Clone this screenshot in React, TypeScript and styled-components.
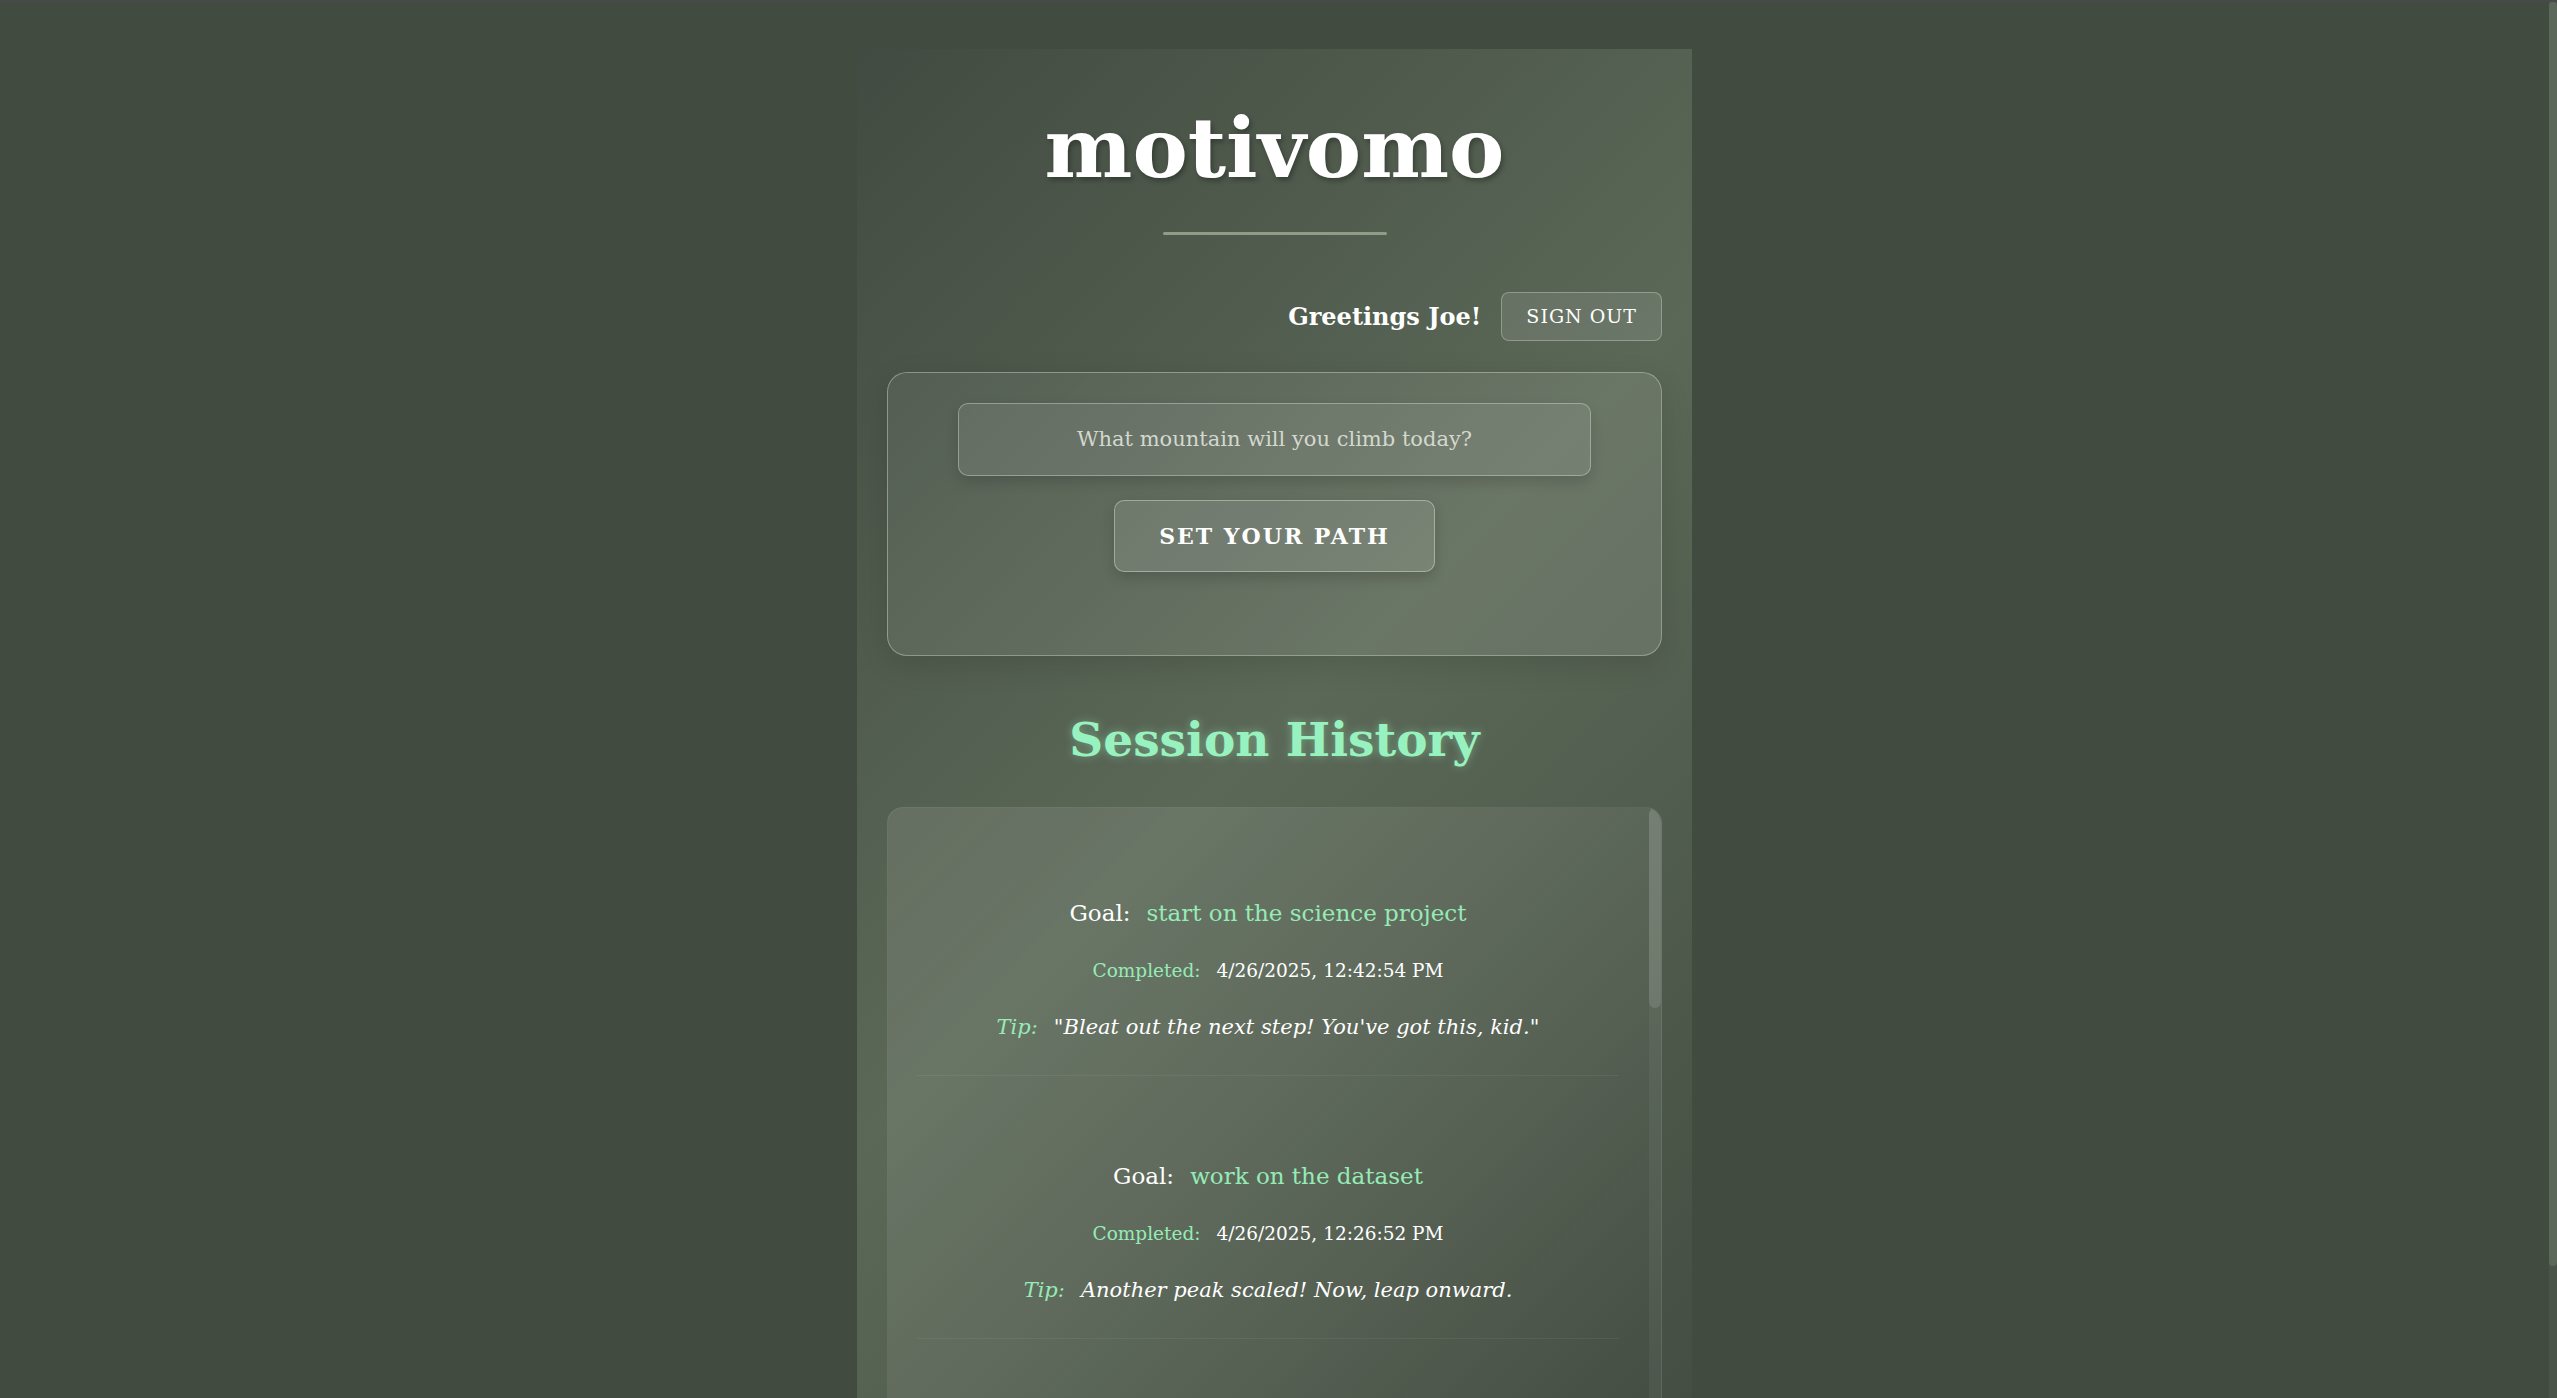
import React from "react";
import styled, { createGlobalStyle } from "styled-components";

const GlobalStyle = createGlobalStyle`
  html, body {
    margin: 0;
    padding: 0;
    background: #414b40;
  }
  body {
    border-top: 2px solid #47494b;
    font-family: "DejaVu Serif", Georgia, serif;
    color: #ffffff;
  }
`;

const Page = styled.div`
  display: flex;
  justify-content: center;
  padding: 47px 8px 47px 0;
`;

const PageScrollbar = styled.div`
  position: fixed;
  top: 2px;
  right: 0;
  bottom: 0;
  width: 8px;
  background: #4a5448;
`;

const PageThumb = styled.div`
  height: 1264px;
  border-radius: 4px;
  background: #5c695a;
`;

const Card = styled.main`
  width: 835px;
  box-sizing: border-box;
  padding: 50px 30px 30px;
  background: linear-gradient(135deg, #424b41 0%, #5b6857 48%, #424c41 100%);
  display: flex;
  flex-direction: column;
`;

const Title = styled.h1`
  margin: 0;
  text-align: center;
  font-size: 83px;
  line-height: 1.2;
  font-weight: 700;
  color: #ffffff;
  text-shadow: 2px 3px 5px rgba(0, 0, 0, 0.3);
`;

const Divider = styled.div`
  width: 224px;
  height: 3px;
  border-radius: 2px;
  margin: 33px auto 0;
  background: #8e9c88;
`;

const UserBar = styled.div`
  display: flex;
  justify-content: flex-end;
  align-items: center;
  gap: 20px;
  margin-top: 57px;
`;

const Greeting = styled.span`
  font-size: 24px;
  font-weight: 700;
  color: #ffffff;
`;

const GlassButton = styled.button`
  font-family: inherit;
  color: #ffffff;
  background: rgba(255, 255, 255, 0.1);
  border: 1px solid rgba(255, 255, 255, 0.28);
  cursor: pointer;
`;

const SignOut = styled(GlassButton)`
  font-size: 19px;
  line-height: 23px;
  letter-spacing: 1px;
  padding: 12px 24px;
  border-radius: 8px;
`;

const GoalForm = styled.form`
  margin-top: 31px;
  display: flex;
  flex-direction: column;
  align-items: center;
  gap: 24px;
  padding: 30px 30px 83px;
  border-radius: 20px;
  border: 1px solid rgba(200, 215, 195, 0.45);
  background: linear-gradient(135deg, rgba(255, 255, 255, 0.06), rgba(255, 255, 255, 0.11));
  box-shadow: 0 8px 30px rgba(0, 0, 0, 0.12);
`;

const GoalInput = styled.input`
  width: 633px;
  height: 73px;
  box-sizing: border-box;
  font-family: inherit;
  font-size: 21px;
  text-align: center;
  color: #ffffff;
  background: rgba(255, 255, 255, 0.08);
  border: 1px solid rgba(220, 230, 215, 0.4);
  border-radius: 10px;
  box-shadow: 0 6px 14px rgba(0, 0, 0, 0.14);
  outline: none;
  &::placeholder {
    color: #d3d8cf;
  }
`;

const PathButton = styled(GlassButton)`
  height: 72px;
  width: 321px;
  font-size: 22px;
  font-weight: 700;
  letter-spacing: 2px;
  border-radius: 10px;
  border-color: rgba(220, 230, 215, 0.45);
  box-shadow: 0 6px 14px rgba(0, 0, 0, 0.16);
`;

const SectionTitle = styled.h2`
  margin: 56px 0 39px;
  text-align: center;
  font-size: 47px;
  line-height: 1.2;
  font-weight: 700;
  color: #98f2bf;
  text-shadow: 0 0 10px rgba(152, 242, 191, 0.45);
`;

const HistoryFrame = styled.div`
  position: relative;
  height: 664px;
  border-radius: 16px;
  border: 1px solid rgba(255, 255, 255, 0.08);
  background: linear-gradient(135deg, rgba(255, 255, 255, 0.1) 0%, rgba(255, 255, 255, 0.07) 45%, rgba(0, 0, 0, 0.02) 100%);
  overflow: hidden;
`;

const HistoryList = styled.section`
  height: 100%;
  box-sizing: border-box;
  overflow-y: auto;
  padding: 5px 42px 0 29px;
  scrollbar-width: none;
  &::-webkit-scrollbar {
    display: none;
  }
`;

const ScrollTrack = styled.div`
  position: absolute;
  top: 0;
  right: 0;
  bottom: 0;
  width: 12px;
  border-radius: 6px;
  background: rgba(255, 255, 255, 0.05);
`;

const ScrollThumb = styled.div`
  height: 200px;
  border-radius: 6px;
  background: rgba(255, 255, 255, 0.12);
`;

const HistoryItem = styled.article`
  display: flex;
  flex-direction: column;
  align-items: center;
  gap: 26px;
  padding: 82px 0 32px;
  border-bottom: 1px solid rgba(255, 255, 255, 0.06);
`;

const Line = styled.div<{ $size: number; $lh: number; $italic?: boolean }>`
  display: flex;
  align-items: baseline;
  gap: 16px;
  font-size: ${(p) => p.$size}px;
  line-height: ${(p) => p.$lh}px;
  font-style: ${(p) => (p.$italic ? "italic" : "normal")};
`;

const Label = styled.span<{ $mint?: boolean }>`
  color: ${(p) => (p.$mint ? "#96ebb6" : "#ffffff")};
`;

const Value = styled.span<{ $mint?: boolean }>`
  color: ${(p) => (p.$mint ? "#96ebb6" : "#ffffff")};
`;

type Session = { goal: string; completed: string; tip: string };

const sessions: Session[] = [
  {
    goal: "start on the science project",
    completed: "4/26/2025, 12:42:54 PM",
    tip: "\"Bleat out the next step! You've got this, kid.\"",
  },
  {
    goal: "work on the dataset",
    completed: "4/26/2025, 12:26:52 PM",
    tip: "Another peak scaled! Now, leap onward.",
  },
  {
    goal: "finish the reading notes",
    completed: "4/25/2025, 4:18:07 PM",
    tip: "Sure-footed and steady, that's the goat way.",
  },
  {
    goal: "clean up the report draft",
    completed: "4/25/2025, 2:03:41 PM",
    tip: "\"One hoof at a time gets you to the summit.\"",
  },
  {
    goal: "review lecture slides",
    completed: "4/24/2025, 7:55:12 PM",
    tip: "The view from the top is worth the climb.",
  },
  {
    goal: "plan the week",
    completed: "4/24/2025, 10:31:29 AM",
    tip: "Rest on the ledge, then keep climbing.",
  },
  {
    goal: "practice for the quiz",
    completed: "4/23/2025, 6:12:45 PM",
    tip: "\"No cliff too steep for a determined kid.\"",
  },
  {
    goal: "write the project outline",
    completed: "4/23/2025, 1:47:03 PM",
    tip: "Baa-rilliant work! Keep that momentum.",
  },
];

export default function App() {
  return (
    <>
      <GlobalStyle />
      <Page>
        <Card>
          <Title>motivomo</Title>
          <Divider />
          <UserBar>
            <Greeting>Greetings Joe!</Greeting>
            <SignOut type="button">SIGN OUT</SignOut>
          </UserBar>
          <GoalForm onSubmit={(e) => e.preventDefault()}>
            <GoalInput placeholder="What mountain will you climb today?" />
            <PathButton type="submit">SET YOUR PATH</PathButton>
          </GoalForm>
          <SectionTitle>Session History</SectionTitle>
          <HistoryFrame>
            <HistoryList>
              {sessions.map((s, i) => (
                <HistoryItem key={i}>
                  <Line $size={23} $lh={36}>
                    <Label>Goal:</Label>
                    <Value $mint>{s.goal}</Value>
                  </Line>
                  <Line $size={18.5} $lh={28}>
                    <Label $mint>Completed:</Label>
                    <Value>{s.completed}</Value>
                  </Line>
                  <Line $size={21} $lh={32} $italic>
                    <Label $mint>Tip:</Label>
                    <Value>{s.tip}</Value>
                  </Line>
                </HistoryItem>
              ))}
            </HistoryList>
            <ScrollTrack>
              <ScrollThumb />
            </ScrollTrack>
          </HistoryFrame>
        </Card>
      </Page>
      <PageScrollbar>
        <PageThumb />
      </PageScrollbar>
    </>
  );
}
